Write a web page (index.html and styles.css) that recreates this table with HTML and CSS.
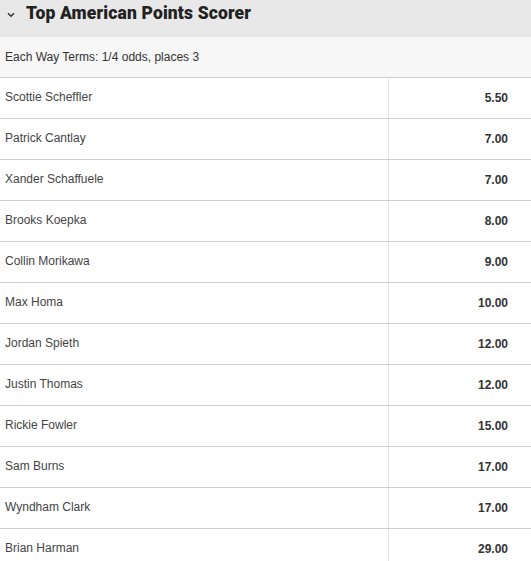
FILE: index.html
```html
<!DOCTYPE html>
<html>
<head>
<meta charset="utf-8">
<link rel="stylesheet" href="styles.css">
</head>
<body>
<div class="market">
  <div class="market-header">
    <svg class="chevron" width="8" height="6" viewBox="0 0 8 6"><path d="M1 1.2 L4 4.2 L7 1.2" fill="none" stroke="#333" stroke-width="1.5"/></svg>
    <h2 class="title">Top American Points Scorer</h2>
  </div>
  <div class="terms">Each Way Terms: 1/4 odds, places 3</div>
  <div class="rows">
    <div class="row"><div class="name">Scottie Scheffler</div><div class="odds">5.50</div></div>
    <div class="row"><div class="name">Patrick Cantlay</div><div class="odds">7.00</div></div>
    <div class="row"><div class="name">Xander Schaffuele</div><div class="odds">7.00</div></div>
    <div class="row"><div class="name">Brooks Koepka</div><div class="odds">8.00</div></div>
    <div class="row"><div class="name">Collin Morikawa</div><div class="odds">9.00</div></div>
    <div class="row"><div class="name">Max Homa</div><div class="odds">10.00</div></div>
    <div class="row"><div class="name">Jordan Spieth</div><div class="odds">12.00</div></div>
    <div class="row"><div class="name">Justin Thomas</div><div class="odds">12.00</div></div>
    <div class="row"><div class="name">Rickie Fowler</div><div class="odds">15.00</div></div>
    <div class="row"><div class="name">Sam Burns</div><div class="odds">17.00</div></div>
    <div class="row"><div class="name">Wyndham Clark</div><div class="odds">17.00</div></div>
    <div class="row"><div class="name">Brian Harman</div><div class="odds">29.00</div></div>
  </div>
</div>
</body>
</html>
```
FILE: styles.css
```css
* { box-sizing: border-box; }
html, body { margin: 0; padding: 0; background: #fff; }
body { font-family: "Liberation Sans", Arial, sans-serif; color: #444; overflow: hidden; }
.market { width: 531px; }
.market-header {
  height: 37px;
  background: #e8e8e8;
  display: flex;
  align-items: flex-start;
  padding: 2px 0 0 7px;
  gap: 11px;
}
.chevron { margin-top: 10px; }
.title {
  margin: 0;
  font-family: "Roboto", "Liberation Sans", sans-serif;
  font-weight: 900;
  font-size: 17.5px;
  line-height: 22px;
  color: #222;
  letter-spacing: 0.15px;
}
.terms {
  height: 41px;
  background: #f7f7f7;
  border-bottom: 1px solid #cfcfcf;
  font-size: 12px;
  color: #333;
  display: flex;
  align-items: center;
  padding: 0 5px 1px;
}
.row {
  display: flex;
  height: 41px;
  border-bottom: 1px solid #cfcfcf;
  font-size: 12px;
}
.name {
  width: 389px;
  border-right: 1px solid #e6e6e6;
  display: flex;
  align-items: center;
  padding: 0 5px 3px;
  color: #444;
}
.odds {
  flex: 1;
  display: flex;
  align-items: center;
  justify-content: flex-end;
  padding: 0 23px 0 0;
  font-weight: bold;
  color: #333;
}
```
